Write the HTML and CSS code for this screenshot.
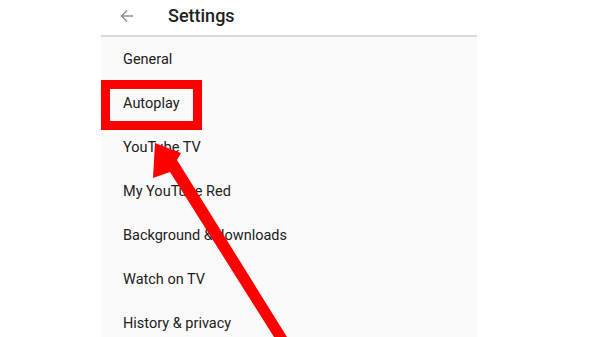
FILE: index.html
```html
<!DOCTYPE html>
<html>
<head>
    <link rel="stylesheet" href="styles.css">
</head>
<body>
    <div class="screen">
        <div class="appbar">
            <svg class="back" width="14" height="14" viewBox="0 0 14 14">
                <path d="M13 7H1.5M7 1.5L1.5 7L7 12.5" fill="none" stroke="#8f8f8f" stroke-width="1.5"/>
            </svg>
            <h1>Settings</h1>
        </div>
        <ul class="menu">
            <li>General</li>
            <li>Autoplay</li>
            <li>YouTube TV</li>
            <li>My YouTube Red</li>
            <li>Background &amp; downloads</li>
            <li>Watch on TV</li>
            <li>History &amp; privacy</li>
        </ul>
    </div>

    <svg class="marks" width="600" height="337" viewBox="0 0 600 337">
        <rect x="105.5" y="84.5" width="92" height="41" fill="none" stroke="#ff0000" stroke-width="9"/>
        <polygon points="155,143 181,153 177,160 287,337 274,337 170,172 153,178" fill="#ff0000"/>
    </svg>
</body>
</html>
```

FILE: styles.css
```css
body {
    margin: 0;
    background-color: #ffffff;
    font-family: Roboto, "Liberation Sans", sans-serif;
    color: #212121;
    overflow: hidden;
}
.screen {
    width: 376px;
    height: 337px;
    margin-left: 101px;
    background-color: #fafafa;
}
.appbar {
    display: flex;
    align-items: center;
    height: 31px;
    padding: 0 0 4px 19px;
    background-color: #ffffff;
    border-bottom: 2px solid #d9d9d9;
}
.back {
    display: block;
}
.appbar h1 {
    margin: 0 0 0 34px;
    font-size: 18px;
    font-weight: 500;
    color: #212121;
}
.menu {
    list-style: none;
    margin: 0;
    padding: 0;
}
.menu li {
    display: flex;
    align-items: center;
    height: 44px;
    padding-left: 22px;
    font-size: 14.5px;
}
.marks {
    position: absolute;
    left: 0;
    top: 0;
}
```
